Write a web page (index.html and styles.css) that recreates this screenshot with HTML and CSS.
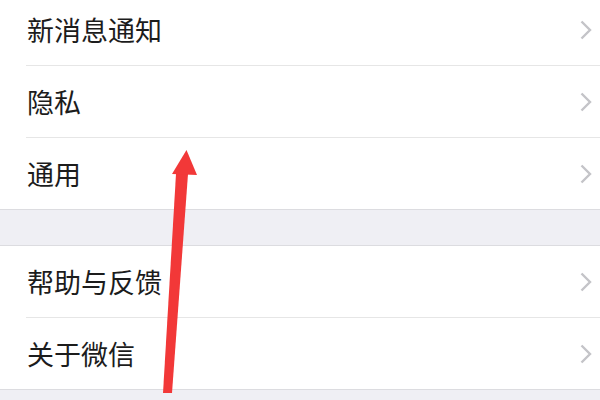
FILE: index.html
```html
<!DOCTYPE html>
<html lang="zh-CN">
<head>
    <meta charset="UTF-8">
    <title>设置</title>
    <link rel="stylesheet" href="styles.css">
</head>
<body>
    <div class="page">
        <ul class="group first">
            <li class="row"><span>新消息通知</span><svg class="chev" viewBox="0 0 12 20"><path d="M1.5 1.5 L10 10 L1.5 18.5"/></svg></li>
            <li class="row"><span>隐私</span><svg class="chev" viewBox="0 0 12 20"><path d="M1.5 1.5 L10 10 L1.5 18.5"/></svg></li>
            <li class="row"><span>通用</span><svg class="chev" viewBox="0 0 12 20"><path d="M1.5 1.5 L10 10 L1.5 18.5"/></svg></li>
        </ul>
        <ul class="group">
            <li class="row"><span>帮助与反馈</span><svg class="chev" viewBox="0 0 12 20"><path d="M1.5 1.5 L10 10 L1.5 18.5"/></svg></li>
            <li class="row"><span>关于微信</span><svg class="chev" viewBox="0 0 12 20"><path d="M1.5 1.5 L10 10 L1.5 18.5"/></svg></li>
        </ul>
        <svg class="arrow" viewBox="0 0 600 400">
            <polygon points="176,181 188,181 172,400 163,400"/>
            <polygon points="186.5,157 197,182 172,181"/>
        </svg>
    </div>
</body>
</html>
```

FILE: styles.css
```css
body {
    margin: 0;
    background-color: #efeff4;
    font-family: "Noto Sans CJK SC", "Noto Sans", sans-serif;
    overflow: hidden;
}
.page {
    position: relative;
    width: 600px;
    height: 400px;
}
.group {
    list-style: none;
    margin: 35px 0 0;
    padding: 0;
    background: #fff;
    border-top: 1px solid #dcdce0;
    border-bottom: 1px solid #dcdce0;
}
.group.first {
    margin-top: -7px;
}
.row {
    display: flex;
    align-items: center;
    justify-content: space-between;
    height: 71px;
    margin-left: 26px;
    padding-right: 8px;
    font-size: 27px;
    color: #1c1c1c;
    border-bottom: 1px solid #e6e6e6;
}
.row:last-child {
    border-bottom: none;
}
.row span {
    padding-left: 1px;
}
.chev {
    width: 12px;
    height: 20px;
}
.chev path {
    fill: none;
    stroke: #c4c4c8;
    stroke-width: 2.4;
}
.arrow {
    position: absolute;
    left: 0;
    top: 0;
    width: 600px;
    height: 400px;
}
.arrow polygon {
    fill: #f23838;
}
```
